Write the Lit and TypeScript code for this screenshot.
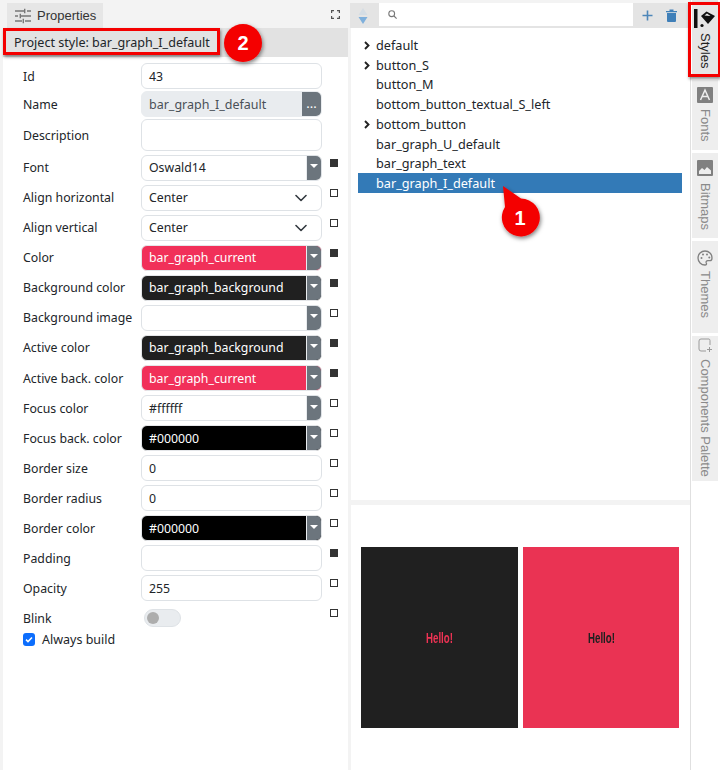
import { LitElement, html, css, nothing } from "lit";
import { customElement } from "lit/decorators.js";

type Row = { label: string; kind: string; value?: string; color?: string; mark?: "on" | "off"; tall?: boolean };

const rows: Row[] = [
  { label: "Id", kind: "text", value: "43" },
  { label: "Name", kind: "name", value: "bar_graph_I_default" },
  { label: "Description", kind: "text", value: "", tall: true },
  { label: "Font", kind: "drop", value: "Oswald14", mark: "on" },
  { label: "Align horizontal", kind: "select", value: "Center", mark: "off" },
  { label: "Align vertical", kind: "select", value: "Center", mark: "off" },
  { label: "Color", kind: "drop", value: "bar_graph_current", color: "red", mark: "on" },
  { label: "Background color", kind: "drop", value: "bar_graph_background", color: "dark", mark: "on" },
  { label: "Background image", kind: "drop", value: "", mark: "off" },
  { label: "Active color", kind: "drop", value: "bar_graph_background", color: "dark", mark: "on" },
  { label: "Active back. color", kind: "drop", value: "bar_graph_current", color: "red", mark: "on" },
  { label: "Focus color", kind: "drop", value: "#ffffff", mark: "off" },
  { label: "Focus back. color", kind: "drop", value: "#000000", color: "black", mark: "off" },
  { label: "Border size", kind: "text", value: "0", mark: "off" },
  { label: "Border radius", kind: "text", value: "0", mark: "off" },
  { label: "Border color", kind: "drop", value: "#000000", color: "black", mark: "off" },
  { label: "Padding", kind: "text", value: "", mark: "on" },
  { label: "Opacity", kind: "text", value: "255", mark: "off" },
];

const tree: { t: string; arrow?: boolean; sel?: boolean }[] = [
  { t: "default", arrow: true },
  { t: "button_S", arrow: true },
  { t: "button_M" },
  { t: "bottom_button_textual_S_left" },
  { t: "bottom_button", arrow: true },
  { t: "bar_graph_U_default" },
  { t: "bar_graph_text" },
  { t: "bar_graph_I_default", sel: true },
];

@customElement("app-root")
export class AppRoot extends LitElement {
  static styles = css`
    :host {
      display: block;
      width: 720px;
      height: 770px;
      font-family: "Noto Sans", "Liberation Sans", sans-serif;
      font-size: 13px;
      color: #212529;
      background: #f3f3f3;
      overflow: hidden;
    }
    * { box-sizing: border-box; }
    .app {
      position: relative;
      width: 720px;
      height: 770px;
      display: grid;
      grid-template-columns: 348px 342px 30px;
      padding-top: 3px;
    }
    .left {
      background: #fff;
      margin-left: 3px;
      display: flex;
      flex-direction: column;
      height: 767px;
    }
    .tabbar {
      height: 25px;
      background: #f3f3f3;
      margin-left: -3px;
      padding-left: 7px;
      display: flex;
      align-items: stretch;
      justify-content: space-between;
    }
    .ptab {
      width: 96px;
      background: #e6e6e6;
      display: flex;
      align-items: center;
      gap: 6px;
      padding-left: 8px;
      font-family: "Liberation Sans", sans-serif;
      font-size: 13px;
      color: #333;
    }
    .max { margin: 7px 8px 0 0; }
    .title {
      height: 29px;
      background: #e2e2e2;
      padding: 0 0 0 11px;
      display: flex;
      align-items: center;
      font-size: 12.55px;
      color: #212529;
    }
    .rows {
      padding: 6px 0 0 20px;
      display: flex;
      flex-direction: column;
      gap: 4.07px;
    }
    .row {
      display: grid;
      grid-template-columns: 118px 181px 1fr;
      align-items: center;
      height: 26px;
    }
    .row.tall { height: 31.4px; }
    .row.tall .lab { padding-top: 1px; }
    .row.name { margin: -2px 0; }
    .lab { white-space: nowrap; font-size: 12.3px; }
    .inp {
      height: 100%;
      border: 1px solid #dee2e6;
      border-radius: 6px;
      background: #fff;
      padding: 0 7px;
      display: flex;
      align-items: center;
      font-size: 12.3px;
      white-space: nowrap;
      overflow: hidden;
      position: relative;
    }
    .inp.name { background: #e9ecef; border-color: #e9ecef; color: #495057; font-size: 12.5px; }
    .inp.red { background: #f13059; color: #fff; }
    .inp.dark { background: #202020; color: #fff; }
    .inp.black { background: #000; color: #fff; }
    .inp.red, .inp.dark, .inp.black { border-color: #e4e6e9; }
    .side {
      position: absolute;
      right: 0;
      top: -1px;
      bottom: -1px;
      background: #6c757d;
      color: #fff;
      display: flex;
      align-items: center;
      justify-content: center;
    }
    .side.dots { width: 19px; font-size: 13px; padding-bottom: 2px; }
    .side.drop { width: 15px; border-left: 1px solid #e9ecef; }
    .caret {
      width: 0; height: 0;
      border-left: 4px solid transparent;
      border-right: 4px solid transparent;
      border-top: 4px solid #fff;
      margin-top: -3px;
    }
    .chev { position: absolute; right: 14px; top: 8px; }
    .markcell { padding: 0 0 10px 8px; display: flex; }
    .mark { width: 8px; height: 8px; border: 1px solid #333; background: #fff; }
    .mark.on { background: #333; }
    .blink {
      display: grid;
      grid-template-columns: 118px 181px 1fr;
      margin-top: 4px;
      height: 26px;
      align-items: center;
    }
    .switch {
      width: 37px; height: 18px;
      margin-left: 3px;
      border-radius: 9px;
      background: #e9ecef;
      border: 1px solid #dee2e6;
      display: flex;
      align-items: center;
      padding-left: 2px;
    }
    .switch i { width: 12px; height: 12px; border-radius: 50%; background: #adadad; display: block; }
    .always {
      display: flex;
      align-items: center;
      gap: 7px;
      margin-top: -1px;
      height: 18px;
      font-size: 12.5px;
    }
    .check {
      width: 12px; height: 13px;
      border-radius: 3px;
      background: #0d6efd;
      display: flex;
      align-items: center;
      justify-content: center;
    }
    .right {
      display: flex;
      flex-direction: column;
      height: 767px;
      margin-left: 3px;
      background: #f3f3f3;
    }
    .tools {
      height: 25px;
      background: #e4e4e4;
      display: flex;
      align-items: center;
      padding-left: 7px;
      margin-left: -1px;
    }
    .search {
      width: 254px;
      height: 23px;
      margin: 0 0 2px 10px;
      background: #fff;
      display: flex;
      align-items: center;
      padding-left: 9px;
    }
    .tools .plus { margin-left: 9px; }
    .tools .trash { margin-left: 13px; }
    .treebox {
      height: 472px;
      background: #fff;
      padding: 7px 7px 0 7px;
    }
    .node {
      height: 19.75px;
      display: flex;
      align-items: center;
      padding-left: 18px;
      position: relative;
      font-size: 12.7px;
      white-space: nowrap;
      width: 324px;
    }
    .node.sel { background: #337ab7; color: #fff; }
    .node svg { position: absolute; left: 6px; top: 6px; }
    .preview {
      flex: 1;
      background: #fff;
      margin-top: 5px;
      padding: 42px 0 0 10px;
      display: flex;
      gap: 5px;
      align-items: flex-start;
    }
    .box {
      height: 181px;
      display: flex;
      align-items: center;
      justify-content: center;
      font-family: "Liberation Sans", sans-serif;
      font-weight: 700;
      font-size: 14px;
    }
    .box span { display: inline-block; transform: scaleX(.69); }
    .box.a { width: 157px; background: #202020; color: #ee3354; }
    .box.b { width: 156px; background: #ea3353; color: #202020; }
    .tabs {
      border-left: 1px solid #e0e0e0;
      background: #fff;
      display: flex;
      flex-direction: column;
      padding: 0 0 0 1px;
      gap: 3px;
      margin-top: -3px;
      height: 770px;
    }
    .vt {
      background: #eeeeee;
      width: 26px;
      display: flex;
      flex-direction: column;
      align-items: center;
      color: #8a8a8a;
      font-family: "Liberation Sans", sans-serif;
      font-size: 13px;
    }
    .vt.on { background: #e6e6e6; color: #222; }
    .vt span { writing-mode: vertical-rl; white-space: nowrap; }
    .t1 { height: 77px; padding-top: 9px; gap: 4px; }
    .t2 { height: 70px; padding-top: 7px; gap: 6px; }
    .t3 { height: 85px; padding-top: 7px; gap: 7px; }
    .t4 { height: 92px; padding-top: 9px; gap: 5px; }
    .t5 { height: 145px; padding-top: 2px; gap: 6px; }
    .redbox {
      position: absolute;
      border: 3px solid #f40000;
      box-shadow: 1px 2px 3px rgba(0, 0, 0, .45);
      pointer-events: none;
    }
    .rb1 { left: 3px; top: 28px; width: 217px; height: 27px; }
    .rb2 { left: 688px; top: 2px; width: 32px; height: 75px; border-right-width: 2px; }
    .overlay { position: absolute; left: 0; top: 0; pointer-events: none; }
    .num {
      font-family: "Liberation Sans", sans-serif;
      font-weight: 700;
      font-size: 20px;
      fill: #fff;
      text-anchor: middle;
    }
  `;

  private row(r: Row) {
    const cls = r.color ?? (r.kind === "name" ? "name" : "");
    return html`<div class="row ${r.tall ? "tall" : ""} ${r.kind === "name" ? "name" : ""}">
      <div class="lab">${r.label}</div>
      <div class="inp ${cls}">
        ${r.value}
        ${r.kind === "name" ? html`<div class="side dots">...</div>` : nothing}
        ${r.kind === "drop" ? html`<div class="side drop"><div class="caret"></div></div>` : nothing}
        ${r.kind === "select"
          ? html`<svg class="chev" width="12" height="8" viewBox="0 0 12 8"><path d="M1 1.5l5 5 5-5" fill="none" stroke="#343a40" stroke-width="1.6" stroke-linecap="round" stroke-linejoin="round"/></svg>`
          : nothing}
      </div>
      <div class="markcell">${r.mark ? html`<div class="mark ${r.mark === "on" ? "on" : ""}"></div>` : nothing}</div>
    </div>`;
  }

  render() {
    return html`<div class="app">
      <section class="left">
        <div class="tabbar">
          <div class="ptab">
            <svg width="16" height="16" viewBox="0 0 16 16" fill="none" stroke="#777" stroke-width="1.4">
              <path d="M0 3h9M12 3h4M9.700 .7v4.600M0 8h3M6 8h10M5.300 5.700v4.600M0 13h7M10 13h6M8.300 10.700v4.600" />
            </svg>
            Properties
          </div>
          <svg class="max" width="9" height="9" viewBox="0 0 9 9" fill="none" stroke="#555" stroke-width="1.2">
            <path d="M.6 3V.6H3M6 .6h2.4V3M8.4 6v2.4H6M3 8.4H.6V6" />
          </svg>
        </div>
        <div class="title">Project style: bar_graph_I_default</div>
        <div class="rows">
          ${rows.map((r) => this.row(r))}
        </div>
        <div class="rows" style="padding-top:0;gap:0">
          <div class="blink">
            <div class="lab">Blink</div>
            <div><div class="switch"><i></i></div></div>
            <div class="markcell"><div class="mark"></div></div>
          </div>
          <div class="always">
            <div class="check">
              <svg width="8" height="7" viewBox="0 0 8 7"><path d="M1 3.6l2 2 4-4.2" fill="none" stroke="#fff" stroke-width="1.5"/></svg>
            </div>
            Always build
          </div>
        </div>
      </section>

      <section class="right">
        <div class="tools">
          <svg width="12" height="18" viewBox="0 0 12 18">
            <path d="M6 1l4.500 7h-9z" fill="#d5dde4" /><path d="M6 17l-4.500-7h9z" fill="#7fb0dc" />
          </svg>
          <div class="search">
            <svg width="9" height="9" viewBox="0 0 9 9" fill="none" stroke="#777" stroke-width="1.1">
              <circle cx="3.700" cy="3.700" r="2.900" /><path d="M6 6l2.600 2.600" />
            </svg>
          </div>
          <svg class="plus" width="11" height="11" viewBox="0 0 11 11"><path d="M5.500 .5v10M.5 5.500h10" stroke="#4d86b9" stroke-width="1.6"/></svg>
          <svg class="trash" width="11" height="13" viewBox="0 0 11 13"><path d="M0 2h11v1.300H0zM3.500.4h4V2h-4zM1 4h9v8a1 1 0 0 1-1 1H2a1 1 0 0 1-1-1z" fill="#3f7fb8"/></svg>
        </div>
        <div class="treebox">
          ${tree.map(
            (n) => html`<div class="node ${n.sel ? "sel" : ""}">
              ${n.arrow
                ? html`<svg width="6" height="9" viewBox="0 0 6 9"><path d="M1 1l3.500 3.500L1 8" fill="none" stroke="#222" stroke-width="1.9"/></svg>`
                : nothing}
              ${n.t}
            </div>`
          )}
        </div>
        <div class="preview">
          <div class="box a"><span>Hello!</span></div>
          <div class="box b"><span>Hello!</span></div>
        </div>
      </section>

      <nav class="tabs">
        <div class="vt on t1">
          <svg width="22" height="20" viewBox="0 0 22 20">
            <rect x="0" y="0" width="3.500" height="19" fill="#111" />
            <path d="M7 7l5.500-4.500L21 7l-7 8z" fill="#111" />
            <path d="M10.500 6.500l2.500-2 3.500 2.500z" fill="#eee" />
            <circle cx="8" cy="16.500" r="1.600" fill="#111" />
          </svg>
          <span>Styles</span>
        </div>
        <div class="vt t2">
          <svg width="16" height="16" viewBox="0 0 16 16">
            <rect width="16" height="16" rx="1" fill="#808080" />
            <path d="M3.500 13L8 3l4.500 10M5.200 9.500h5.600" fill="none" stroke="#eee" stroke-width="1.500" />
          </svg>
          <span>Fonts</span>
        </div>
        <div class="vt t3">
          <svg width="16" height="16" viewBox="0 0 16 16">
            <rect width="16" height="16" rx="1" fill="#808080" />
            <path d="M2 14v-3l3-3 2.500 2L10 7l4 3.500V14z" fill="#eee" />
          </svg>
          <span>Bitmaps</span>
        </div>
        <div class="vt t4">
          <svg width="16" height="16" viewBox="0 0 16 16" fill="none" stroke="#808080" stroke-width="1.300">
            <path d="M8 1a7 7 0 1 0 0 14c1.500 0 1.800-1 1.300-2-.6-1.300.2-2.300 1.500-2.300H13c1.300 0 2-.9 2-2.700C15 4 12 1 8 1z" />
            <circle cx="4.500" cy="8" r="1" fill="#808080" stroke="none" />
            <circle cx="6" cy="4.500" r="1" fill="#808080" stroke="none" />
            <circle cx="10" cy="4.500" r="1" fill="#808080" stroke="none" />
            <circle cx="12.300" cy="7.500" r="1" fill="#808080" stroke="none" />
          </svg>
          <span>Themes</span>
        </div>
        <div class="vt t5">
          <svg width="15" height="15" viewBox="0 0 15 15" fill="none" stroke="#9a9a9a" stroke-width="1">
            <path d="M11 1H3a2 2 0 0 0-2 2v8a2 2 0 0 0 2 2h5M11 1a1.500 1.500 0 0 1 1 1.500V7M11.500 9v5M9 11.500h5" />
          </svg>
          <span>Components Palette</span>
        </div>
      </nav>

      <div class="redbox rb1"></div>
      <div class="redbox rb2"></div>
      <svg class="overlay" width="720" height="770" viewBox="0 0 720 770">
        <defs>
          <filter id="sh" x="-30%" y="-30%" width="160%" height="160%">
            <feDropShadow dx="1" dy="2" stdDeviation="2" flood-color="#000" flood-opacity=".5" />
          </filter>
        </defs>
        <g filter="url(#sh)"><circle cx="243" cy="43" r="19" fill="#f40000" /></g>
        <text class="num" x="243" y="50">2</text>
        <g filter="url(#sh)"><path d="M503 186L521 198.500A19 19 0 1 1 505 207Z" fill="#f40000" /></g>
        <text class="num" x="520" y="225">1</text>
      </svg>
    </div>`;
  }
}
